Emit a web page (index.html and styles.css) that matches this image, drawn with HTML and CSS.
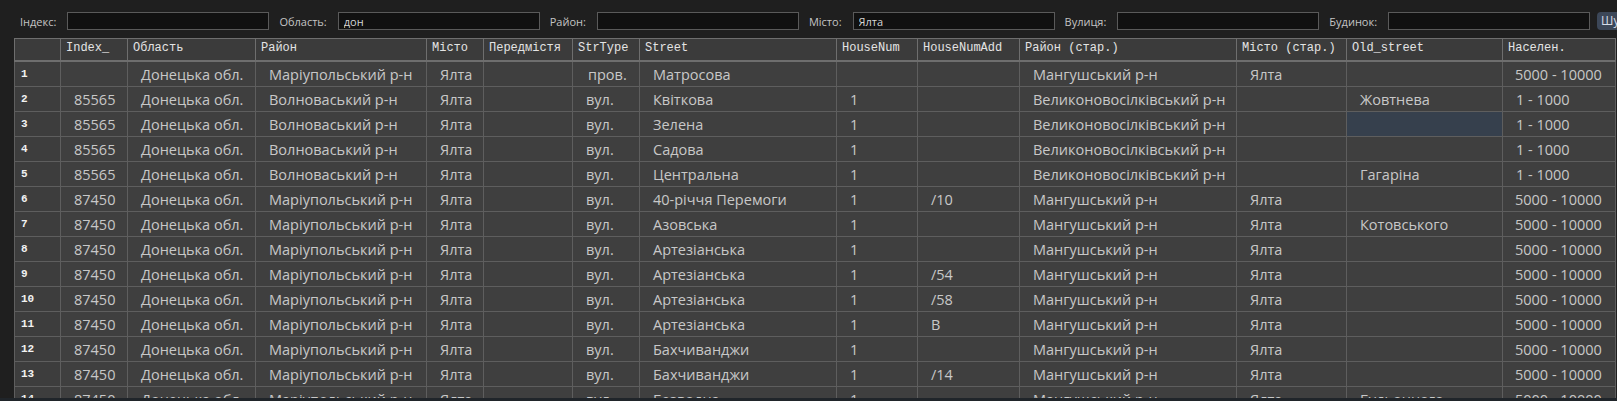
FILE: index.html
```html
<!DOCTYPE html>
<html lang="uk">
<head>
<meta charset="utf-8">
<title>Адреси</title>
<link rel="stylesheet" href="styles.css">
</head>
<body>
<div class="filters">
  <label class="field"><span class="field-label">Індекс:</span><input class="field-input" type="text" value=""></label>
  <label class="field"><span class="field-label">Область:</span><input class="field-input" type="text" value="дон"></label>
  <label class="field"><span class="field-label">Район:</span><input class="field-input" type="text" value=""></label>
  <label class="field"><span class="field-label">Місто:</span><input class="field-input" type="text" value="Ялта"></label>
  <label class="field"><span class="field-label">Вулиця:</span><input class="field-input" type="text" value=""></label>
  <label class="field"><span class="field-label">Будинок:</span><input class="field-input" type="text" value=""></label>
  <button class="search-btn" type="button">Шукати</button>
</div>
<div class="grid-wrap">
  <table class="grid">
    <colgroup>
      <col class="c-num"><col class="c-index"><col class="c-obl"><col class="c-raion"><col class="c-city">
      <col class="c-suburb"><col class="c-strtype"><col class="c-street"><col class="c-house"><col class="c-houseadd">
      <col class="c-raion-old"><col class="c-city-old"><col class="c-street-old"><col class="c-pop">
    </colgroup>
    <thead>
      <tr>
        <th></th><th>Index_</th><th>Область</th><th>Район</th><th>Місто</th><th>Передмістя</th><th>StrType</th><th>Street</th><th>HouseNum</th><th>HouseNumAdd</th><th>Район (стар.)</th><th>Місто (стар.)</th><th>Old_street</th><th>Населен.</th>
      </tr>
    </thead>
    <tbody>
      <tr><th>1</th><td></td><td>Донецька обл.</td><td>Маріупольський р-н</td><td>Ялта</td><td></td><td class="mid">пров.</td><td>Матросова</td><td></td><td></td><td>Мангушський р-н</td><td>Ялта</td><td></td><td class="end">5000 - 10000</td></tr>
      <tr><th>2</th><td>85565</td><td>Донецька обл.</td><td>Волноваський р-н</td><td>Ялта</td><td></td><td>вул.</td><td>Квіткова</td><td>1</td><td></td><td>Великоновосілківський р-н</td><td></td><td>Жовтнева</td><td>1 - 1000</td></tr>
      <tr><th>3</th><td>85565</td><td>Донецька обл.</td><td>Волноваський р-н</td><td>Ялта</td><td></td><td>вул.</td><td>Зелена</td><td>1</td><td></td><td>Великоновосілківський р-н</td><td></td><td class="selected"></td><td>1 - 1000</td></tr>
      <tr><th>4</th><td>85565</td><td>Донецька обл.</td><td>Волноваський р-н</td><td>Ялта</td><td></td><td>вул.</td><td>Садова</td><td>1</td><td></td><td>Великоновосілківський р-н</td><td></td><td></td><td>1 - 1000</td></tr>
      <tr><th>5</th><td>85565</td><td>Донецька обл.</td><td>Волноваський р-н</td><td>Ялта</td><td></td><td>вул.</td><td>Центральна</td><td>1</td><td></td><td>Великоновосілківський р-н</td><td></td><td>Гагаріна</td><td>1 - 1000</td></tr>
      <tr><th>6</th><td>87450</td><td>Донецька обл.</td><td>Маріупольський р-н</td><td>Ялта</td><td></td><td>вул.</td><td>40-річчя Перемоги</td><td>1</td><td>/10</td><td>Мангушський р-н</td><td>Ялта</td><td></td><td class="end">5000 - 10000</td></tr>
      <tr><th>7</th><td>87450</td><td>Донецька обл.</td><td>Маріупольський р-н</td><td>Ялта</td><td></td><td>вул.</td><td>Азовська</td><td>1</td><td></td><td>Мангушський р-н</td><td>Ялта</td><td>Котовського</td><td class="end">5000 - 10000</td></tr>
      <tr><th>8</th><td>87450</td><td>Донецька обл.</td><td>Маріупольський р-н</td><td>Ялта</td><td></td><td>вул.</td><td>Артезіанська</td><td>1</td><td></td><td>Мангушський р-н</td><td>Ялта</td><td></td><td class="end">5000 - 10000</td></tr>
      <tr><th>9</th><td>87450</td><td>Донецька обл.</td><td>Маріупольський р-н</td><td>Ялта</td><td></td><td>вул.</td><td>Артезіанська</td><td>1</td><td>/54</td><td>Мангушський р-н</td><td>Ялта</td><td></td><td class="end">5000 - 10000</td></tr>
      <tr><th>10</th><td>87450</td><td>Донецька обл.</td><td>Маріупольський р-н</td><td>Ялта</td><td></td><td>вул.</td><td>Артезіанська</td><td>1</td><td>/58</td><td>Мангушський р-н</td><td>Ялта</td><td></td><td class="end">5000 - 10000</td></tr>
      <tr><th>11</th><td>87450</td><td>Донецька обл.</td><td>Маріупольський р-н</td><td>Ялта</td><td></td><td>вул.</td><td>Артезіанська</td><td>1</td><td>В</td><td>Мангушський р-н</td><td>Ялта</td><td></td><td class="end">5000 - 10000</td></tr>
      <tr><th>12</th><td>87450</td><td>Донецька обл.</td><td>Маріупольський р-н</td><td>Ялта</td><td></td><td>вул.</td><td>Бахчиванджи</td><td>1</td><td></td><td>Мангушський р-н</td><td>Ялта</td><td></td><td class="end">5000 - 10000</td></tr>
      <tr><th>13</th><td>87450</td><td>Донецька обл.</td><td>Маріупольський р-н</td><td>Ялта</td><td></td><td>вул.</td><td>Бахчиванджи</td><td>1</td><td>/14</td><td>Мангушський р-н</td><td>Ялта</td><td></td><td class="end">5000 - 10000</td></tr>
      <tr><th>14</th><td>87450</td><td>Донецька обл.</td><td>Маріупольський р-н</td><td>Ялта</td><td></td><td>вул.</td><td>Безводна</td><td>1</td><td></td><td>Мангушський р-н</td><td>Ялта</td><td>Будьонного</td><td class="end">5000 - 10000</td></tr>
    </tbody>
  </table>
</div>
<div class="hscroll"></div>
</body>
</html>
```

FILE: styles.css
```css
html, body {
  margin: 0;
  padding: 0;
  height: 100%;
}

body {
  background: #1f1f1f;
  overflow: hidden;
  display: flex;
  flex-direction: column;
  font-family: "Open Sans", "Liberation Sans", sans-serif;
}

/* filter bar */
.filters {
  display: flex;
  align-items: center;
  height: 18px;
  padding: 12px 0 8px 20px;
  white-space: nowrap;
}

.field {
  display: flex;
  align-items: center;
  margin-right: 10px;
  flex: none;
}

.field-label {
  color: #c4c4c4;
  font-size: 11px;
  margin-right: 11px;
}

.field-input {
  box-sizing: border-box;
  width: 202px;
  height: 18px;
  margin: 0;
  padding: 0 5px;
  background: #111111;
  border: 1px solid #5a5a5a;
  color: #d6d6d6;
  font-family: "Open Sans", "Liberation Sans", sans-serif;
  font-size: 11px;
  outline: none;
}

.search-btn {
  flex: none;
  height: 18px;
  margin: 0 0 0 -3px;
  padding: 0 4px;
  border: 0;
  border-radius: 4px;
  background: #3c4758;
  color: #d5dde8;
  font-family: "Open Sans", "Liberation Sans", sans-serif;
  font-size: 12px;
  line-height: 18px;
}

/* data grid */
.grid-wrap {
  flex: 1;
  min-height: 0;
  overflow: hidden;
  padding-left: 14px;
}

.grid {
  table-layout: fixed;
  width: 1601px;
  border-collapse: collapse;
  background: #3f3f3f;
  border-left: 1px solid #5c5c5c;
}

.c-num { width: 46px; }
.c-index { width: 67px; }
.c-obl { width: 128px; }
.c-raion { width: 171px; }
.c-city { width: 57px; }
.c-suburb { width: 89px; }
.c-strtype { width: 67px; }
.c-street { width: 197px; }
.c-house { width: 81px; }
.c-houseadd { width: 102px; }
.c-raion-old { width: 217px; }
.c-city-old { width: 110px; }
.c-street-old { width: 156px; }
.c-pop { width: 113px; }

.grid thead th {
  height: 19px;
  padding: 2px 5px 0;
  vertical-align: top;
  text-align: left;
  background: #3b3b3b;
  border: 1px solid #6e6e6e;
  border-bottom-width: 2px;
  color: #e4e4e4;
  font-family: "Liberation Mono", "DejaVu Sans Mono", monospace;
  font-size: 12px;
  font-weight: normal;
  line-height: 14px;
  white-space: nowrap;
  overflow: hidden;
}

.grid tbody th {
  height: 24px;
  padding: 0 0 0 6px;
  text-align: left;
  background: #3d3d3d;
  border: 1px solid #5e5e5e;
  color: #f2f2f2;
  font-family: "Liberation Mono", "DejaVu Sans Mono", monospace;
  font-size: 11px;
  font-weight: bold;
  line-height: 24px;
}

.grid td {
  height: 22px;
  padding: 2px 0 0 13px;
  border: 1px solid #5e5e5e;
  color: #c8c8c8;
  font-size: 14.5px;
  line-height: 22px;
  white-space: nowrap;
  overflow: hidden;
}

.grid td.mid {
  padding-left: 15px;
}

.grid td.end {
  padding-left: 12px;
}

.grid td.selected {
  background: #36404d;
}

.hscroll {
  flex: none;
  height: 3px;
  background: #20252a;
}
```
